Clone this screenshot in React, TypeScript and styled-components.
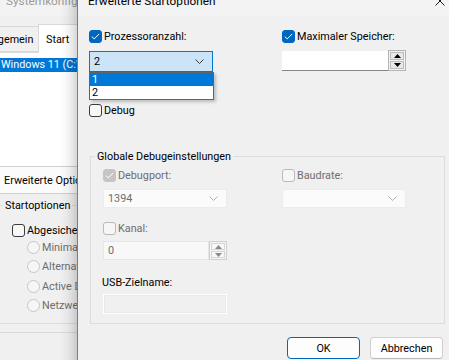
import React from "react";
import styled, { createGlobalStyle, css } from "styled-components";

const FONT = `Roboto, "Liberation Sans", Arial, sans-serif`;

const GlobalStyle = createGlobalStyle`
  html, body { margin: 0; padding: 0; }
  * { box-sizing: border-box; }
  body {
    width: 449px; height: 360px; overflow: hidden;
    background: #f0f0f0;
    font-family: ${FONT};
    font-size: 10.8px;
    color: #000;
  }
`;

const Desktop = styled.div`
  position: relative;
  width: 449px;
  height: 360px;
  overflow: hidden;
  background: #f0f0f0;
`;

/* ---------- background window: Systemkonfiguration ---------- */

const BackWindow = styled.div`
  position: absolute;
  left: -30px;
  top: -14px;
  width: 240px;
  height: 390px;
  background: #f0f0f0;
  display: flex;
  flex-direction: column;
`;

const BackTitle = styled.div`
  flex: none;
  height: 30px;
  display: flex;
  align-items: center;
  padding-left: 36px;
  font-size: 11.8px;
  color: #9b9b9b;
  background: #f3f3f3;
`;

const TabStrip = styled.div`
  flex: none;
  display: flex;
  align-items: flex-end;
  height: 28px;
  margin-top: 8px;
  padding-left: 10px;
  position: relative;
  z-index: 1;
`;

const Tab = styled.div<{ $active?: boolean; $w: number }>`
  width: ${(p) => p.$w}px;
  display: flex;
  align-items: center;
  padding-left: ${(p) => (p.$active ? 7 : 0)}px;
  justify-content: ${(p) => (p.$active ? "flex-start" : "center")};
  border: 1px solid #d9d9d9;
  ${(p) =>
    p.$active
      ? css`
          height: 29px;
          margin-bottom: -1px;
          border-bottom: none;
          background: #ffffff;
        `
      : css`
          height: 26px;
          border-right: none;
          background: #f0f0f0;
        `}
`;

const TabPanel = styled.div`
  flex: none;
  margin-left: 6px;
  border: 1px solid #d9d9d9;
  background: #f0f0f0;
  display: flex;
  flex-direction: column;
`;

const ListBox = styled.div`
  height: 113px;
  margin: 0 6px;
  background: #ffffff;
  padding-top: 5px;
`;

const ListItem = styled.div<{ $selected?: boolean }>`
  height: 14px;
  line-height: 14px;
  padding-left: 18px;
  white-space: nowrap;
  background: ${(p) => (p.$selected ? "#0078d7" : "transparent")};
  color: ${(p) => (p.$selected ? "#ffffff" : "#000")};
`;

const BackButton = styled.div`
  height: 28px;
  width: 150px;
  margin-left: 6px;
  border: 1px solid #d0d0d0;
  background: #fbfbfb;
  display: flex;
  align-items: center;
  padding-left: 20px;
  white-space: nowrap;
`;

const BackGroup = styled.fieldset`
  margin: 5px 0 8px 20px;
  padding: 0;
  border: 1px solid #dcdcdc;
  min-width: 0;
`;

const Legend = styled.legend<{ $offset: number }>`
  margin-left: ${(p) => p.$offset}px;
  padding: 0 2px;
  line-height: 13px;
  height: 13px;
  white-space: nowrap;
`;

const BackGroupInner = styled.div`
  padding: 12px 0 11px 14px;
  display: flex;
  flex-direction: column;
`;

const RadioList = styled.div`
  margin-top: 3.5px;
  padding-left: 15px;
  display: flex;
  flex-direction: column;
  gap: 6.5px;
`;

/* ---------- common controls ---------- */

const CheckRow = styled.div`
  height: 13px;
  display: flex;
  align-items: center;
  white-space: nowrap;
`;

const Box = styled.span<{ $checked?: boolean; $disabled?: boolean }>`
  flex: none;
  width: 13px;
  height: 13px;
  border-radius: 3px;
  display: inline-flex;
  align-items: center;
  justify-content: center;
  ${(p) =>
    p.$checked
      ? css`
          background: ${p.$disabled ? "#c5c5c5" : "#0067c0"};
          border: 1px solid ${p.$disabled ? "#c5c5c5" : "#0067c0"};
        `
      : css`
          background: ${p.$disabled ? "#f6f6f6" : "#f8f8f8"};
          border: 1px solid ${p.$disabled ? "#b9b9b9" : "#3b3b3b"};
        `}
`;

const RadioCircle = styled.span`
  flex: none;
  width: 13px;
  height: 13px;
  border-radius: 50%;
  border: 1px solid #c6c6c6;
  background: #f6f6f6;
`;

const Label = styled.span<{ $disabled?: boolean }>`
  margin-left: 2px;
  line-height: 13px;
  color: ${(p) => (p.$disabled ? "#6d6d6d" : "#000")};
`;

const Check = ({
  checked,
  disabled,
  label,
  labelDisabled,
}: {
  checked?: boolean;
  disabled?: boolean;
  label: string;
  labelDisabled?: boolean;
}) => (
  <CheckRow>
    <Box $checked={checked} $disabled={disabled}>
      {checked && (
        <svg width="9" height="7" viewBox="0 0 9 7">
          <path d="M0.8 3.6 L3.2 5.9 L8.2 0.9" fill="none" stroke="#ffffff" strokeWidth="1" />
        </svg>
      )}
    </Box>
    <Label $disabled={labelDisabled}>{label}</Label>
  </CheckRow>
);

const Radio = ({ label }: { label: string }) => (
  <CheckRow>
    <RadioCircle />
    <Label $disabled>{label}</Label>
  </CheckRow>
);

const Chevron = ({ color }: { color: string }) => (
  <svg width="9" height="5" viewBox="0 0 9 5">
    <path d="M0.5 0.5 L4.5 4.5 L8.5 0.5" fill="none" stroke={color} strokeWidth="1" />
  </svg>
);

const ComboWrap = styled.div`
  position: relative;
  width: 124px;
`;

const Combo = styled.div<{ $focused?: boolean; $h: number }>`
  height: ${(p) => p.$h}px;
  display: flex;
  align-items: center;
  justify-content: space-between;
  padding: 0 8px 0 4px;
  ${(p) =>
    p.$focused
      ? css`
          background: #cce4f7;
          border: 1px solid #0078d4;
          color: #000;
        `
      : css`
          background: #fbfbfb;
          border: 1px solid #ececec;
          color: #6d6d6d;
        `}
`;

const DropList = styled.div`
  position: absolute;
  top: 100%;
  left: 0;
  width: 125px;
  border: 1px solid #646464;
  background: #ffffff;
  box-shadow: 2px 2px 3px rgba(0, 0, 0, 0.22);
  z-index: 5;
`;

const DropItem = styled.div<{ $selected?: boolean }>`
  height: 13px;
  line-height: 13px;
  padding-left: 2px;
  background: ${(p) => (p.$selected ? "#0078d7" : "#ffffff")};
  color: ${(p) => (p.$selected ? "#ffffff" : "#000")};
`;

const Spin = styled.div`
  display: flex;
  align-items: stretch;
`;

const SpinField = styled.div<{ $disabled?: boolean; $w: number }>`
  width: ${(p) => p.$w}px;
  height: ${(p) => (p.$disabled ? 19 : 20)}px;
  display: flex;
  align-items: center;
  padding-left: 4px;
  ${(p) =>
    p.$disabled
      ? css`
          background: #f8f8f8;
          border: 1px solid #e6e6e6;
          color: #6d6d6d;
        `
      : css`
          background: #ffffff;
          border-bottom: 1px solid #858585;
        `}
`;

const SpinButtons = styled.div<{ $disabled?: boolean }>`
  width: 18px;
  display: flex;
  flex-direction: column;
  margin-top: ${(p) => (p.$disabled ? 0 : -1)}px;
  border: 1px solid ${(p) => (p.$disabled ? "#d0d0d0" : "#b4b4b4")};
  background: ${(p) => (p.$disabled ? "#f4f4f4" : "#f3f3f3")};
  padding: 1px;
  gap: 1px;
`;

const SpinBtn = styled.div<{ $disabled?: boolean }>`
  flex: 1;
  display: flex;
  align-items: center;
  justify-content: center;
  border: 1px solid ${(p) => (p.$disabled ? "#d6d6d6" : "#bcbcbc")};
  background: ${(p) => (p.$disabled ? "#f7f7f7" : "#e8e8e8")};
`;

const Tri = ({ up, color }: { up?: boolean; color: string }) => (
  <svg width="7" height="4" viewBox="0 0 7 4">
    <path d={up ? "M0 4 L3.5 0 L7 4 Z" : "M0 0 L3.5 4 L7 0 Z"} fill={color} />
  </svg>
);

const SpinBox = ({ value, disabled, w }: { value: string; disabled?: boolean; w: number }) => (
  <Spin>
    <SpinField $disabled={disabled} $w={w}>
      {value}
    </SpinField>
    <SpinButtons $disabled={disabled}>
      <SpinBtn $disabled={disabled}>
        <Tri up color={disabled ? "#8a8a8a" : "#000"} />
      </SpinBtn>
      <SpinBtn $disabled={disabled}>
        <Tri color={disabled ? "#8a8a8a" : "#000"} />
      </SpinBtn>
    </SpinButtons>
  </Spin>
);

/* ---------- dialog ---------- */

const Dialog = styled.div`
  position: absolute;
  left: 77px;
  top: -15px;
  width: 376px;
  height: 392px;
  background: #f0f0f0;
  border: 1px solid #7e7e7e;
  box-shadow: 0 0 16px rgba(0, 0, 0, 0.32);
  display: flex;
  flex-direction: column;
  z-index: 2;
`;

const TitleBar = styled.div`
  flex: none;
  height: 30px;
  display: flex;
  align-items: center;
  justify-content: space-between;
  padding: 0 7px 0 10px;
  background: #f3f3f3;
  font-size: 11.8px;
`;

const Body = styled.div`
  padding: 14px 7px 0 11px;
  display: flex;
  flex-direction: column;
`;

const TopGrid = styled.div`
  display: grid;
  grid-template-columns: 193px 1fr;
`;

const Col = styled.div`
  display: flex;
  flex-direction: column;
  align-items: flex-start;
`;

const Gap = styled.div<{ $h: number }>`
  height: ${(p) => p.$h}px;
  flex: none;
`;

const Group = styled.fieldset`
  margin: 33px 0 0 1px;
  padding: 0;
  border: 1px solid #dcdcdc;
  min-width: 0;
`;

const GroupGrid = styled.div`
  display: grid;
  grid-template-columns: 179px 1fr;
  padding: 6px 0 9px 12px;
`;

const TextLabel = styled.div`
  height: 13px;
  line-height: 13px;
  margin-left: -1px;
`;

const DisabledField = styled.div`
  width: 124px;
  height: 20px;
  background: #f0f0f0;
  border: 1px solid #ffffff;
  outline: 1px solid #e9e9e9;
  outline-offset: -2px;
`;

const ButtonRow = styled.div`
  display: flex;
  justify-content: flex-end;
  gap: 10px;
  margin: 13px 2px 0 0;
`;

const Button = styled.div<{ $primary?: boolean }>`
  width: 73px;
  height: 22px;
  display: flex;
  align-items: center;
  justify-content: center;
  border-radius: 4px;
  background: #fdfdfd;
  border: 1px solid ${(p) => (p.$primary ? "#0067c0" : "#d0d0d0")};
  ${(p) => !p.$primary && css`border-bottom-color: #b8b8b8;`}
`;

export default function App() {
  return (
    <>
      <GlobalStyle />
      <Desktop>
        <BackWindow>
          <BackTitle>Systemkonfiguration</BackTitle>
          <TabStrip>
            <Tab $w={58}>Allgemein</Tab>
            <Tab $active $w={50}>
              Start
            </Tab>
          </TabStrip>
          <TabPanel>
            <ListBox>
              <ListItem $selected>Windows 11 (C:\Windows) : Aktuelles Betriebssystem</ListItem>
            </ListBox>
            <BackButton>Erweiterte Optionen...</BackButton>
            <BackGroup>
              <Legend $offset={5}>Startoptionen</Legend>
              <BackGroupInner>
                <Check label="Abgesicherter Start" />
                <RadioList>
                  <Radio label="Minimal" />
                  <Radio label="Alternative Shell" />
                  <Radio label="Active Directory-Reparatur" />
                  <Radio label="Netzwerk" />
                </RadioList>
              </BackGroupInner>
            </BackGroup>
          </TabPanel>
        </BackWindow>

        <Dialog>
          <TitleBar>
            <span>Erweiterte Startoptionen</span>
            <svg width="10" height="10" viewBox="0 0 10 10">
              <path d="M0.5 0.5 L9.5 9.5 M9.5 0.5 L0.5 9.5" stroke="#1a1a1a" strokeWidth="1" />
            </svg>
          </TitleBar>
          <Body>
            <TopGrid>
              <Col>
                <Check checked label="Prozessoranzahl:" />
                <Gap $h={8} />
                <ComboWrap>
                  <Combo $focused $h={21}>
                    <span>2</span>
                    <Chevron color="#3a3a3a" />
                  </Combo>
                  <DropList>
                    <DropItem $selected>1</DropItem>
                    <DropItem>2</DropItem>
                  </DropList>
                </ComboWrap>
                <Gap $h={32} />
                <Check label="Debug" />
              </Col>
              <Col>
                <Check checked label="Maximaler Speicher:" />
                <Gap $h={8} />
                <SpinBox value="" w={106} />
              </Col>
            </TopGrid>

            <Group>
              <Legend $offset={4}>Globale Debugeinstellungen</Legend>
              <GroupGrid>
                <Col>
                  <Check checked disabled labelDisabled label="Debugport:" />
                  <Gap $h={7} />
                  <ComboWrap>
                    <Combo $h={19}>
                      <span>1394</span>
                      <Chevron color="#b0b0b0" />
                    </Combo>
                  </ComboWrap>
                  <Gap $h={14} />
                  <Check disabled labelDisabled label="Kanal:" />
                  <Gap $h={6} />
                  <SpinBox value="0" disabled w={106} />
                  <Gap $h={16} />
                  <TextLabel>USB-Zielname:</TextLabel>
                  <Gap $h={5} />
                  <DisabledField />
                </Col>
                <Col>
                  <Check disabled labelDisabled label="Baudrate:" />
                  <Gap $h={7} />
                  <ComboWrap>
                    <Combo $h={19}>
                      <span />
                      <Chevron color="#b0b0b0" />
                    </Combo>
                  </ComboWrap>
                </Col>
              </GroupGrid>
            </Group>

            <ButtonRow>
              <Button $primary>OK</Button>
              <Button>Abbrechen</Button>
            </ButtonRow>
          </Body>
        </Dialog>
      </Desktop>
    </>
  );
}
